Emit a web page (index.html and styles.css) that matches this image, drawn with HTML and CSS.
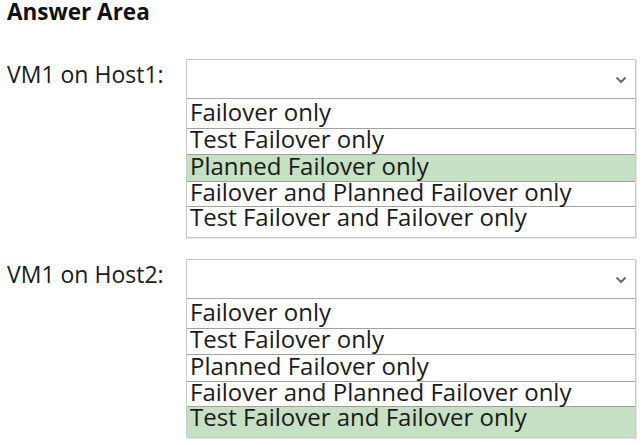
FILE: index.html
```html
<!DOCTYPE html>
<html>
<head>
<meta charset="utf-8">
<link rel="stylesheet" href="styles.css">
</head>
<body>
<div class="page">
  <h1 class="title">Answer Area</h1>
  <div class="question q1">
    <div class="label">VM1 on Host1:</div>
    <div class="dropdown">
      <div class="select"><svg class="chev" width="12" height="8" viewBox="0 0 12 8"><path d="M1.5 1.5 L6 6 L10.5 1.5" fill="none" stroke="#6b6b6b" stroke-width="2"/></svg></div>
      <div class="opt r1">Failover only</div>
      <div class="opt r2">Test Failover only</div>
      <div class="opt r3 sel">Planned Failover only</div>
      <div class="opt r4">Failover and Planned Failover only</div>
      <div class="opt r5">Test Failover and Failover only</div>
    </div>
  </div>
  <div class="question q2">
    <div class="label">VM1 on Host2:</div>
    <div class="dropdown">
      <div class="select"><svg class="chev" width="12" height="8" viewBox="0 0 12 8"><path d="M1.5 1.5 L6 6 L10.5 1.5" fill="none" stroke="#6b6b6b" stroke-width="2"/></svg></div>
      <div class="opt r1">Failover only</div>
      <div class="opt r2">Test Failover only</div>
      <div class="opt r3">Planned Failover only</div>
      <div class="opt r4">Failover and Planned Failover only</div>
      <div class="opt r5 sel">Test Failover and Failover only</div>
    </div>
  </div>
</div>
</body>
</html>
```
FILE: styles.css
```css
html, body {
  margin: 0;
  padding: 0;
  background: #fff;
}
.page {
  width: 642px;
  height: 445px;
  font-family: "Open Sans", "Noto Sans", sans-serif;
  color: #1a1a1a;
}
.title {
  margin: 0;
  padding: 0 0 0 7px;
  height: 59px;
  font-size: 22.5px;
  font-weight: 700;
  line-height: 24px;
  color: #111;
}
.question {
  display: flex;
  align-items: flex-start;
}
.q2 {
  margin-top: 21px;
}
.label {
  width: 179px;
  padding-left: 7px;
  font-size: 23px;
  line-height: 30px;
  color: #1a1a1a;
}
.dropdown {
  width: 448px;
  border: 1px solid #c9c9c9;
  box-shadow: 1px 1px 0 #e6e6e6;
}
.select {
  height: 38px;
  border-bottom: 1px solid #a8a8a8;
  display: flex;
  justify-content: flex-end;
  align-items: center;
  padding-right: 8px;
}
.chev {
  margin-top: 2px;
}
.opt {
  padding-left: 3px;
  font-size: 24px;
  color: #1a1a1a;
  white-space: nowrap;
}
.opt + .opt {
  border-top: 1px solid #a0a0a0;
}
.r1 { height: 29px; line-height: 25px; }
.r2 { height: 25px; line-height: 20px; }
.r3 { height: 26px; line-height: 21px; }
.r4 { height: 24px; line-height: 19px; }
.r5 { height: 30px; line-height: 20px; }
.sel {
  background: #c6e0c4;
}
```
